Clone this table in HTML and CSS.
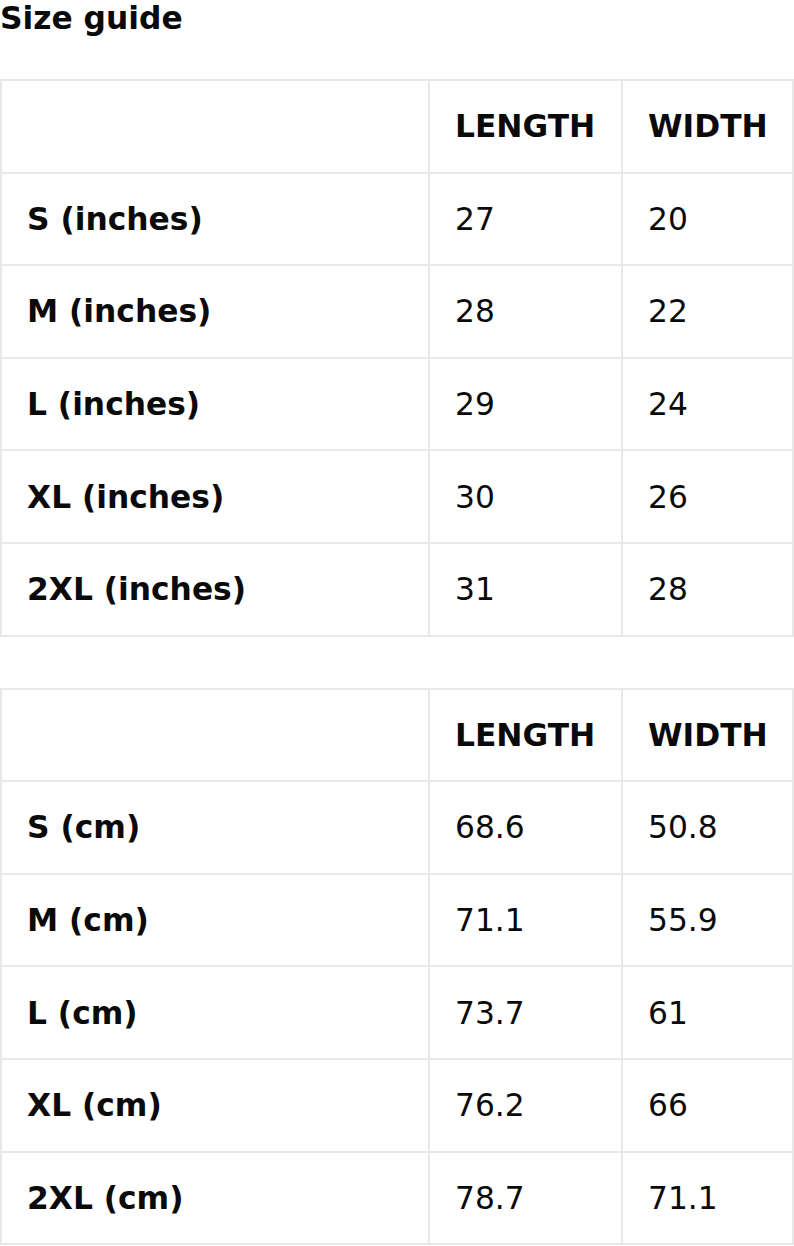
FILE: index.html
```html
<!DOCTYPE html>
<html>
<head>
<meta charset="utf-8">
<link rel="stylesheet" href="styles.css">
</head>
<body>
<h2 class="title">Size guide</h2>
<table class="size-table">
  <colgroup><col class="c1"><col class="c2"><col class="c3"></colgroup>
  <tr><th></th><th>LENGTH</th><th>WIDTH</th></tr>
  <tr><th>S (inches)</th><td>27</td><td>20</td></tr>
  <tr><th>M (inches)</th><td>28</td><td>22</td></tr>
  <tr><th>L (inches)</th><td>29</td><td>24</td></tr>
  <tr><th>XL (inches)</th><td>30</td><td>26</td></tr>
  <tr><th>2XL (inches)</th><td>31</td><td>28</td></tr>
</table>
<table class="size-table second">
  <colgroup><col class="c1"><col class="c2"><col class="c3"></colgroup>
  <tr><th></th><th>LENGTH</th><th>WIDTH</th></tr>
  <tr><th>S (cm)</th><td>68.6</td><td>50.8</td></tr>
  <tr><th>M (cm)</th><td>71.1</td><td>55.9</td></tr>
  <tr><th>L (cm)</th><td>73.7</td><td>61</td></tr>
  <tr><th>XL (cm)</th><td>76.2</td><td>66</td></tr>
  <tr><th>2XL (cm)</th><td>78.7</td><td>71.1</td></tr>
</table>
</body>
</html>
```
FILE: styles.css
```css
html, body {
  margin: 0;
  padding: 0;
  background: #ffffff;
}
body {
  font-family: "DejaVu Sans", Verdana, sans-serif;
  color: #0a0a0a;
}
.title {
  margin: 0;
  padding: 0;
  font-size: 31.3px;
  font-weight: bold;
  line-height: 36px;
  height: 79px;
}
.size-table {
  border-collapse: collapse;
  table-layout: fixed;
  width: 792px;
  margin-left: 0;
}
.size-table.second {
  margin-top: 51px;
}
.c1 { width: 428px; }
.c2 { width: 193px; }
.c3 { width: 171px; }
.size-table th,
.size-table td {
  border: 2px solid #e8e8e8;
  height: 92.6px;
  padding: 0 0 0 25px;
  text-align: left;
  font-size: 31.3px;
  vertical-align: middle;
  box-sizing: border-box;
}
.size-table th {
  font-weight: bold;
}
.size-table td {
  font-weight: normal;
}
```
